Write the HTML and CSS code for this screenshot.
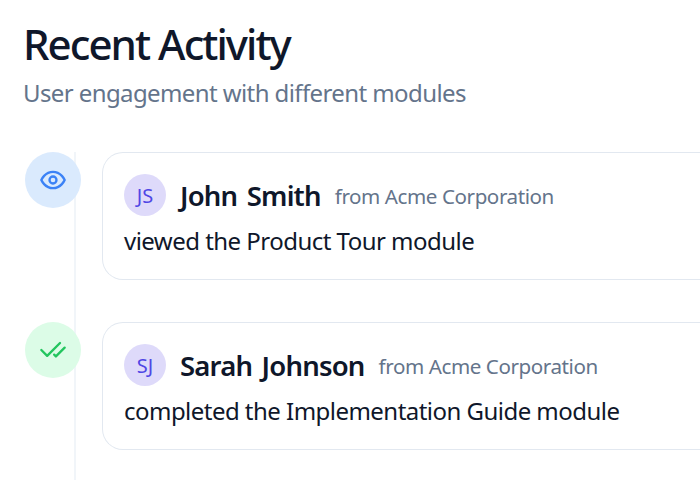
FILE: index.html
```html
<!DOCTYPE html>
<html lang="en">
<head>
    <meta charset="UTF-8">
    <meta name="viewport" content="width=device-width, initial-scale=1.0">
    <title>Recent Activity</title>
    <link rel="stylesheet" href="styles.css">
</head>
<body>
    <div class="container">
        <h1 class="title">Recent Activity</h1>
        <p class="subtitle">User engagement with different modules</p>
        <div class="timeline">
            <div class="item">
                <div class="marker marker-view">
                    <svg class="icon" viewBox="0 0 24 24">
                        <path d="M2 12s3-7 10-7 10 7 10 7-3 7-10 7-10-7-10-7Z"/>
                        <circle cx="12" cy="12" r="3"/>
                    </svg>
                </div>
                <div class="card">
                    <div class="user">
                        <span class="avatar">JS</span>
                        <span class="name">John Smith</span>
                        <span class="company">from Acme Corporation</span>
                    </div>
                    <p class="action">viewed the Product Tour module</p>
                </div>
            </div>
            <div class="item">
                <div class="marker marker-done">
                    <svg class="icon" viewBox="0 0 24 24">
                        <path d="M18 6 7 17l-5-5"/>
                        <path d="m22 10-7.5 7.5L13 16"/>
                    </svg>
                </div>
                <div class="card">
                    <div class="user">
                        <span class="avatar">SJ</span>
                        <span class="name">Sarah Johnson</span>
                        <span class="company">from Acme Corporation</span>
                    </div>
                    <p class="action">completed the Implementation Guide module</p>
                </div>
            </div>
        </div>
    </div>
</body>
</html>
```
FILE: styles.css
```css
body {
    margin: 0;
    background-color: #fff;
    color: #0f172a;
    font-family: "Noto Sans", "Open Sans", sans-serif;
}
.container {
    height: 480px;
    padding: 23px 0 0 23px;
    box-sizing: border-box;
    display: flex;
    flex-direction: column;
}
.title {
    margin: 0;
    font-size: 42px;
    line-height: 42px;
    font-weight: 500;
    letter-spacing: -1.95px;
}
.subtitle {
    margin: 10px 0 0;
    font-size: 24px;
    line-height: 35px;
    letter-spacing: -0.6px;
    color: #64748b;
}
.timeline {
    flex: 1;
    margin-top: 42px;
    display: flex;
    flex-direction: column;
    gap: 42px;
    background: linear-gradient(#f1f5f9, #f1f5f9) 51px 0 / 2px 100% no-repeat;
}
.item {
    display: flex;
    gap: 21px;
    padding-left: 2px;
}
.marker {
    width: 56px;
    height: 56px;
    border-radius: 50%;
    display: flex;
    align-items: center;
    justify-content: center;
}
.marker-view {
    background-color: #daeafd;
    color: #3b82f6;
}
.marker-done {
    background-color: #dcfce7;
    color: #22c55e;
}
.icon {
    width: 28px;
    height: 28px;
    fill: none;
    stroke: currentColor;
    stroke-width: 2;
    stroke-linecap: round;
    stroke-linejoin: round;
}
.card {
    flex: 1;
    height: 128px;
    box-sizing: border-box;
    padding: 21px;
    border: 1px solid #e2e8f0;
    border-right: none;
    border-radius: 21px 0 0 21px;
    background-color: #fff;
}
.user {
    display: flex;
    align-items: center;
    gap: 14px;
    white-space: nowrap;
}
.avatar {
    width: 42px;
    height: 42px;
    border-radius: 50%;
    background-color: #dedafa;
    color: #4f46e5;
    font-size: 20px;
    line-height: 44px;
    text-align: center;
}
.name {
    font-size: 27.5px;
    line-height: 44px;
    font-weight: 600;
    letter-spacing: -0.8px;
    word-spacing: 3px;
    height: 42px;
}
.company {
    font-size: 20.6px;
    line-height: 44px;
    letter-spacing: -0.43px;
    color: #64748b;
    height: 42px;
}
.action {
    margin: 7px 0 0;
    font-size: 24px;
    line-height: 35px;
    letter-spacing: -0.53px;
    white-space: nowrap;
}
```
